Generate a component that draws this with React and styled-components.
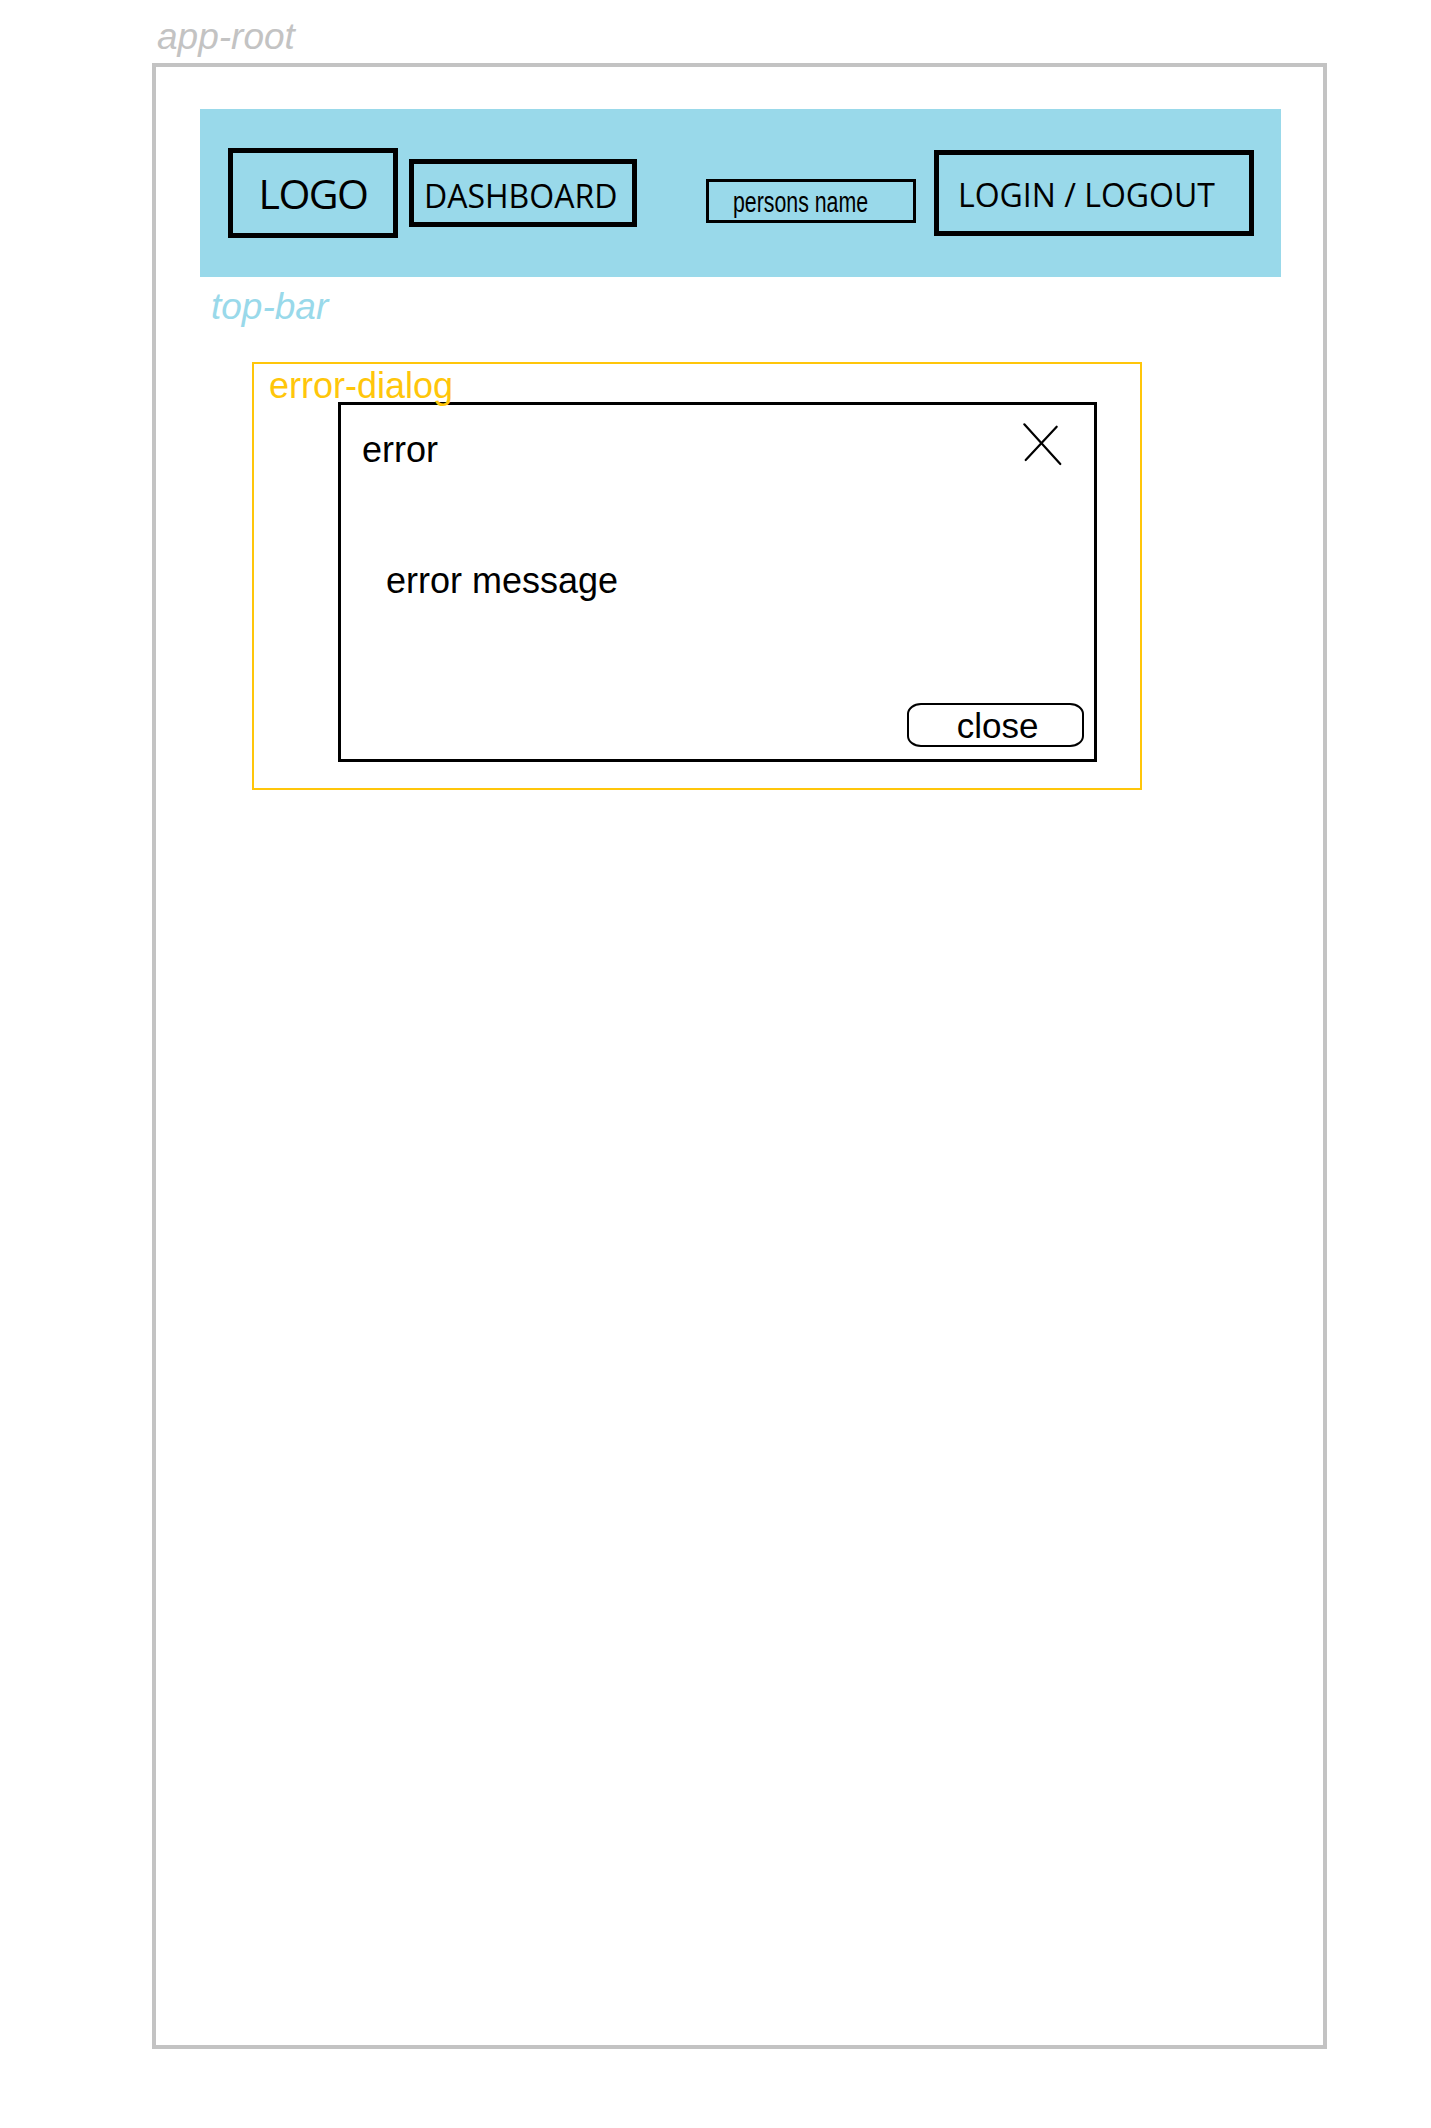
import React from "react";
import styled, { createGlobalStyle } from "styled-components";

const GlobalStyle = createGlobalStyle`
  html, body {
    margin: 0;
    padding: 0;
    background: #ffffff;
  }
  body {
    font-family: "Liberation Sans", Arial, sans-serif;
    color: #000000;
  }
  * { box-sizing: border-box; }
`;

const Page = styled.div`
  padding: 17px 0 60px 152px;
`;

const CanvasLabel = styled.div`
  font-family: "Liberation Sans", Arial, sans-serif;
  font-style: italic;
  font-size: 37px;
  line-height: 37px;
  height: 37px;
  color: ${(p) => p.$color};
  margin: ${(p) => p.$margin || "0"};
  padding-top: ${(p) => p.$shift || 0}px;
  white-space: nowrap;
`;

const Frame = styled.div`
  margin-top: 9px;
  width: 1175px;
  height: 1986px;
  border: 4px solid #c3c3c3;
  padding: 42px 0 0 44px;
`;

const TopBar = styled.header`
  width: 1081px;
  height: 168px;
  background: #99d9ea;
  display: flex;
  align-items: center;
  padding: 0 27px 0 28px;
`;

const BarBox = styled.div`
  flex: none;
  width: ${(p) => p.$w}px;
  height: ${(p) => p.$h}px;
  border: ${(p) => p.$border || 5}px solid #000;
  display: flex;
  align-items: center;
  justify-content: ${(p) => (p.$center ? "center" : "flex-start")};
  padding: ${(p) => p.$pad || "0"};
  margin: ${(p) => p.$margin || "0"};
  font-family: "Open Sans", "Noto Sans", sans-serif;
  font-size: ${(p) => p.$fs}px;
  letter-spacing: ${(p) => p.$ls || 0}px;
  line-height: 1;
  color: #000;
  white-space: nowrap;
`;

const NameBox = styled.div`
  flex: none;
  margin: 16px 0 0 auto;
  width: 210px;
  height: 44px;
  border: 3px solid #000;
  padding: 6px 0 0 24px;
  overflow: visible;
`;

const NameText = styled.span`
  display: inline-block;
  font-family: "Liberation Sans", Arial, sans-serif;
  font-size: 29px;
  line-height: 29px;
  white-space: nowrap;
  transform: scaleX(0.735);
  transform-origin: left top;
`;

const DialogZone = styled.section`
  margin: 38px 0 0 52px;
  width: 890px;
  border: 2px solid #ffc60a;
  padding: 4px 0 26px 0;
`;

const ZoneLabel = styled.div`
  font-family: "Liberation Sans", Arial, sans-serif;
  font-size: 36px;
  line-height: 34px;
  height: 34px;
  padding-top: 1px;
  color: #ffc60a;
  margin-left: 15px;
  white-space: nowrap;
`;

const Dialog = styled.div`
  margin-left: 84px;
  width: 759px;
  height: 360px;
  border: 3px solid #000;
  background: #fff;
  display: flex;
  flex-direction: column;
`;

const DialogHeader = styled.div`
  display: flex;
  justify-content: space-between;
  align-items: flex-start;
  padding: 17px 32px 0 21px;
`;

const DialogTitle = styled.div`
  margin-top: 10px;
  font-size: 36px;
  line-height: 36px;
  color: #000;
`;

const CloseIcon = styled.svg`
  display: block;
  flex: none;
`;

const Message = styled.div`
  margin-top: 95px;
  padding-left: 45px;
  font-size: 36px;
  line-height: 36px;
  color: #000;
`;

const DialogFooter = styled.div`
  margin-top: auto;
  display: flex;
  justify-content: flex-end;
  padding: 0 10px 12px 0;
`;

const CloseButton = styled.button`
  width: 177px;
  height: 44px;
  border: 2.5px solid #000;
  border-radius: 14px / 11px;
  background: #fff;
  padding: 1px 0 0 4px;
  font-family: "Liberation Sans", Arial, sans-serif;
  font-size: 35px;
  line-height: 39px;
  color: #000;
  text-align: center;
  cursor: pointer;
`;

export default function App() {
  return (
    <>
      <GlobalStyle />
      <Page>
        <CanvasLabel $color="#c3c3c3" $margin="0 0 0 5px" $shift={1}>app-root</CanvasLabel>
        <Frame>
          <TopBar>
            <BarBox $w={170} $h={90} $fs={41} $ls={-1.5} $center>
              LOGO
            </BarBox>
            <BarBox $w={228} $h={68} $fs={32} $pad="6px 0 0 10px" $margin="0 0 0 11px">
              DASHBOARD
            </BarBox>
            <NameBox>
              <NameText>persons name</NameText>
            </NameBox>
            <BarBox $w={320} $h={86} $fs={32} $pad="4px 0 0 19px" $margin="0 0 0 18px">
              LOGIN / LOGOUT
            </BarBox>
          </TopBar>
          <CanvasLabel $color="#99d9ea" $margin="10px 0 0 11px" $shift={1}>top-bar</CanvasLabel>
          <DialogZone>
            <ZoneLabel>error-dialog</ZoneLabel>
            <Dialog>
              <DialogHeader>
                <DialogTitle>error</DialogTitle>
                <CloseIcon width="40" height="44" viewBox="0 0 40 44" aria-label="close">
                  <line x1="2.3" y1="2.3" x2="38.3" y2="42" stroke="#000" strokeWidth="2.2" strokeLinecap="round" />
                  <line x1="34.7" y1="4.7" x2="3.7" y2="38" stroke="#000" strokeWidth="2.2" strokeLinecap="round" />
                </CloseIcon>
              </DialogHeader>
              <Message>error message</Message>
              <DialogFooter>
                <CloseButton type="button">close</CloseButton>
              </DialogFooter>
            </Dialog>
          </DialogZone>
        </Frame>
      </Page>
    </>
  );
}
